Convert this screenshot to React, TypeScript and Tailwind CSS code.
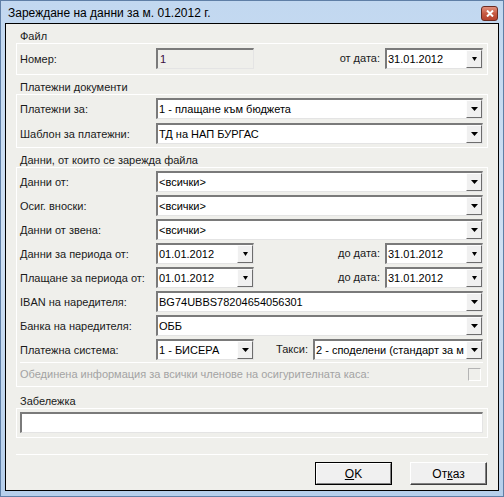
import React from 'react';

const sunken =
  'border-t-2 border-l-2 border-r border-b border-t-[#7a7a7a] border-l-[#7a7a7a] border-r-[#e4e4e4] border-b-[#e4e4e4]';

const DropBtn: React.FC<{ small?: boolean }> = ({ small }) => (
  <div className="w-[16px] h-full flex items-center justify-center bg-[#f0f0f0] border-l border-t border-l-[#fdfdfd] border-t-[#fdfdfd] border-r border-b border-r-[#6d6d6d] border-b-[#6d6d6d] shrink-0">
    {small ? (
      <svg width="5" height="4" viewBox="0 0 5 4">
        <path d="M0 0h5L2.5 4z" fill="#000" />
      </svg>
    ) : (
      <svg width="7" height="4" viewBox="0 0 7 4">
        <path d="M0 0h7L3.5 4z" fill="#000" />
      </svg>
    )}
  </div>
);

const Combo: React.FC<{ value: string; className?: string; small?: boolean }> = ({ value, className = '', small }) => (
  <div className={`flex h-[21px] bg-white ${sunken} ${className}`}>
    <div className="flex-1 min-w-0 overflow-hidden whitespace-nowrap pl-[1px] leading-[18px] text-[11px] text-black">
      {value}
    </div>
    <DropBtn small={small} />
  </div>
);

const Label: React.FC<{ children: React.ReactNode; className?: string }> = ({ children, className = '' }) => (
  <div className={`w-[136px] shrink-0 whitespace-nowrap text-[11px] leading-[14px] text-[#1a1a1a] ${className}`}>{children}</div>
);

const Row: React.FC<{ children: React.ReactNode }> = ({ children }) => (
  <div className="flex items-center h-[21px]">{children}</div>
);

const SectionTitle: React.FC<{ children: React.ReactNode; className?: string }> = ({ children, className = '' }) => (
  <div className={`ml-[4px] text-[11px] leading-[14px] text-[#1a1a1a] ${className}`}>{children}</div>
);

const Panel: React.FC<{ children: React.ReactNode; className?: string }> = ({ children, className = '' }) => (
  <div className={`border border-white pl-[3px] pr-[4px] ${className}`}>{children}</div>
);

export default function App() {
  return (
    <div className="w-[504px] h-[497px] font-['Liberation_Sans',Arial,sans-serif] bg-gradient-to-b from-[#c2d8f0] via-[#cfe0f3] to-[#b6cfeb] border border-[#5f7fa6] flex flex-col">
      {/* Title bar */}
      <div className="h-[22px] flex items-center pl-[7px] pr-[5px] shrink-0">
        <div className="flex-1 text-[12px] text-black leading-none pt-[2px]">Зареждане на данни за м. 01.2012 г.</div>
        <div className="w-[17px] h-[15px] mt-[2px] rounded-[3px] border border-[#6b2b22] bg-gradient-to-b from-[#e0907e] via-[#c75a43] to-[#b4402c] flex items-center justify-center">
          <svg width="8" height="7" viewBox="0 0 8 7">
            <path d="M1 0.5 L7 6.5 M7 0.5 L1 6.5" stroke="#fff" strokeWidth="2" />
          </svg>
        </div>
      </div>

      {/* Client area */}
      <div className="ml-[4px] mr-[4px] h-[468px] border border-black bg-[#efefeb] flex flex-col px-[10px]">
        <SectionTitle className="mt-[5px]">Файл</SectionTitle>
        <Panel className="pt-[4px] pb-[5px]">
          <Row>
            <Label>Номер:</Label>
            <div className={`w-[98px] h-[21px] ${sunken} bg-[#efefeb] pl-[2px] leading-[18px] text-[11px] text-[#3a0c40]`}>1</div>
            <div className="flex-1" />
            <div className="text-[11px] text-[#1a1a1a] mr-[5px]">от дата:</div>
            <Combo value="31.01.2012" className="w-[98px]" small />
          </Row>
        </Panel>

        <SectionTitle className="mt-[6px] !leading-[13px]">Платежни документи</SectionTitle>
        <Panel className="pt-[3px] pb-[3px] flex flex-col gap-[4px]">
          <Row>
            <Label>Платежни за:</Label>
            <Combo value="1 - плащане към бюджета" className="flex-1" />
          </Row>
          <Row>
            <Label>Шаблон за платежни:</Label>
            <Combo value="ТД на НАП БУРГАС" className="flex-1" />
          </Row>
        </Panel>

        <SectionTitle className="mt-[5px]">Данни, от които се зарежда файла</SectionTitle>
        <Panel className="pt-[3px] pb-[5px] flex flex-col">
          <div className="flex flex-col gap-[3px]">
            <Row>
              <Label>Данни от:</Label>
              <Combo value="<всички>" className="flex-1" />
            </Row>
            <Row>
              <Label>Осиг. вноски:</Label>
              <Combo value="<всички>" className="flex-1" />
            </Row>
            <Row>
              <Label>Данни от звена:</Label>
              <Combo value="<всички>" className="flex-1" />
            </Row>
            <Row>
              <Label>Данни за периода от:</Label>
              <Combo value="01.01.2012" className="w-[98px]" small />
              <div className="flex-1" />
              <div className="text-[11px] text-[#1a1a1a] mr-[5px]">до дата:</div>
              <Combo value="31.01.2012" className="w-[98px]" small />
            </Row>
            <Row>
              <Label>Плащане за периода от:</Label>
              <Combo value="01.01.2012" className="w-[98px]" small />
              <div className="flex-1" />
              <div className="text-[11px] text-[#1a1a1a] mr-[5px]">до дата:</div>
              <Combo value="31.01.2012" className="w-[98px]" small />
            </Row>
            <Row>
              <Label>IBAN на наредителя:</Label>
              <Combo value="BG74UBBS78204654056301" className="flex-1" />
            </Row>
            <Row>
              <Label>Банка на наредителя:</Label>
              <Combo value="ОББ" className="flex-1" />
            </Row>
            <Row>
              <Label>Платежна система:</Label>
              <Combo value="1 - БИСЕРА" className="w-[98px]" />
              <div className="flex-1" />
              <div className="text-[11px] text-[#1a1a1a] mr-[5px]">Такси:</div>
              <Combo value="2 - споделени (стандарт за м" className="w-[170px]" />
            </Row>
          </div>
          <div className="mt-[2px] border-t border-white" />
          <div className="mt-[4px] h-[14px] flex items-center">
            <div className="flex-1 text-[11px] leading-[14px] text-[#a3a3a3]">
              Обединена информация за всички членове на осигурителната каса:
            </div>
            <div className="w-[13px] h-[13px] mr-[2px] border border-t-[#b4b4b4] border-l-[#b4b4b4] border-r-[#ffffff] border-b-[#ffffff] bg-[#efefeb]" />
          </div>
        </Panel>

        <SectionTitle className="mt-[8px] !leading-[13px]">Забележка</SectionTitle>
        <Panel className="pt-[3px] pb-[4px]">
          <div className={`h-[21px] bg-white ${sunken}`} />
        </Panel>

        <div className="mt-[16px] border-t border-white" />

        <div className="mt-[7px] flex justify-end gap-[18px] pr-[1px]">
          <div className="w-[77px] h-[23px] bg-[#f0f0f0] border border-black flex">
            <div className="flex-1 flex items-center justify-center border-t border-l border-t-white border-l-white border-r border-b border-r-[#808080] border-b-[#808080] text-[12px] text-black">
              <span>
                <span className="underline">O</span>K
              </span>
            </div>
          </div>
          <div className="w-[77px] h-[23px] bg-[#f0f0f0] flex items-center justify-center border-t border-l border-t-white border-l-white border-r border-b border-r-[#404040] border-b-[#404040] shadow-[inset_-1px_-1px_0_#808080] text-[12px] text-black">
            <span>
              От<span className="underline">к</span>аз
            </span>
          </div>
        </div>
      </div>
    </div>
  );
}
